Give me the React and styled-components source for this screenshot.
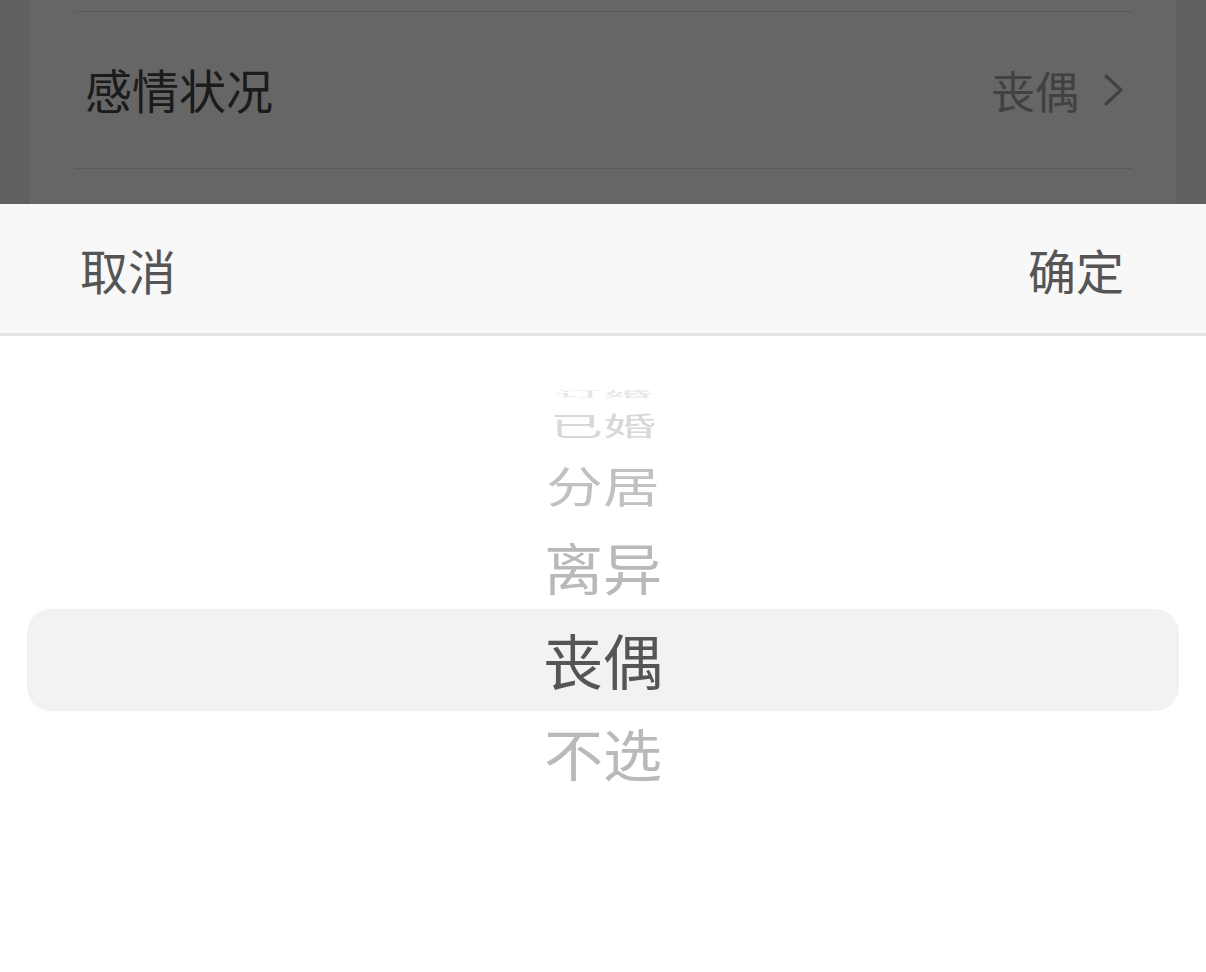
import React from "react";
import styled, { createGlobalStyle } from "styled-components";

const Global = createGlobalStyle`
  html, body { margin: 0; padding: 0; background: #eeeeee; }
  body { font-family: "Noto Sans CJK SC", "Noto Sans", sans-serif; }
  * { box-sizing: border-box; }
`;

const Screen = styled.div`
  position: relative;
  width: 1206px;
  height: 972px;
  overflow: hidden;
  background: #efefef;
`;

const Card = styled.div`
  margin: 0 30px;
  padding: 11px 44px 0 45px;
  background: #ffffff;
  height: 972px;
`;

const Row = styled.div`
  display: flex;
  align-items: center;
  justify-content: space-between;
  height: 158px;
  border-top: 1px solid #e2e2e2;
  border-bottom: 1px solid #e2e2e2;
  padding: 0 7px 0 10px;
`;

const Label = styled.span`
  font-size: 47px;
  color: #444444;
  line-height: 1;
  margin-top: -3px;
`;

const Value = styled.span`
  display: flex;
  align-items: center;
  gap: 24px;
  font-size: 44px;
  color: #a2a2a2;
  line-height: 1;
`;

const Mask = styled.div`
  position: absolute;
  inset: 0;
  background: rgba(0, 0, 0, 0.6);
`;

const Sheet = styled.div`
  position: absolute;
  left: 0;
  right: 0;
  bottom: 0;
  height: 768px;
  display: flex;
  flex-direction: column;
  background: #ffffff;
`;

const Toolbar = styled.div`
  display: flex;
  align-items: center;
  justify-content: space-between;
  height: 132px;
  padding: 1px 82px 0 80px;
  background: #f8f8f8;
  border-bottom: 3px solid #e4e4e4;
`;

const ToolButton = styled.span`
  font-size: 48px;
  line-height: 1;
  color: #555555;
`;

const Stage = styled.div`
  position: relative;
  flex: 1;
  overflow: hidden;
`;

const Highlight = styled.div`
  position: absolute;
  left: 27px;
  right: 27px;
  top: 273px;
  height: 102px;
  border-radius: 24px;
  background: #f2f2f4;
`;

const Drum = styled.div`
  position: absolute;
  left: 0;
  right: 0;
  top: 323px;
  height: 0;
`;

const WheelItem = styled.div.attrs((p) => ({
  style: {
    transform: `translateY(${p.$y}px) scale(${p.$sx}, ${p.$sy})`,
    opacity: p.$fade,
  },
}))`
  position: absolute;
  left: 0;
  right: 0;
  top: -40px;
  height: 80px;
  line-height: 80px;
  text-align: center;
  font-size: 60px;
  color: ${(p) => (p.$active ? "#555555" : "#b9b9b9")};
  white-space: nowrap;
`;

const Chevron = () => (
  <svg width="22" height="34" viewBox="0 0 22 34" fill="none">
    <polyline
      points="3,3 18,17 3,31"
      stroke="#a2a2a2"
      strokeWidth="3.2"
      strokeLinecap="round"
      strokeLinejoin="round"
    />
  </svg>
);

const OPTIONS = ["单身", "恋爱中", "订婚", "已婚", "分居", "离异", "丧偶", "不选"];
const SELECTED = 6;
const RADIUS = 268;
const STEP = 20.3;
const PERSPECTIVE = 1100;
const FADES = { 0: 1, 1: 1, 2: 0.88, 3: 0.55, 4: 0.35 };

export default function App() {
  return (
    <>
      <Global />
      <Screen>
        <Card>
          <Row>
            <Label>感情状况</Label>
            <Value>
              丧偶
              <Chevron />
            </Value>
          </Row>
        </Card>
        <Mask />
        <Sheet>
          <Toolbar>
            <ToolButton>取消</ToolButton>
            <ToolButton>确定</ToolButton>
          </Toolbar>
          <Stage>
            <Highlight />
            <Drum>
              {OPTIONS.map((text, i) => {
                const k = i - SELECTED;
                const deg = k * STEP;
                if (Math.abs(deg) >= 88) return null;
                const rad = (deg * Math.PI) / 180;
                const cos = Math.cos(rad);
                const s = PERSPECTIVE / (PERSPECTIVE + RADIUS * (1 - cos));
                return (
                  <WheelItem
                    key={text}
                    $active={k === 0}
                    $y={RADIUS * Math.sin(rad)}
                    $sx={s}
                    $sy={s * cos}
                    $fade={FADES[Math.abs(k)] ?? 0.3}
                  >
                    {text}
                  </WheelItem>
                );
              })}
            </Drum>
          </Stage>
        </Sheet>
      </Screen>
    </>
  );
}
